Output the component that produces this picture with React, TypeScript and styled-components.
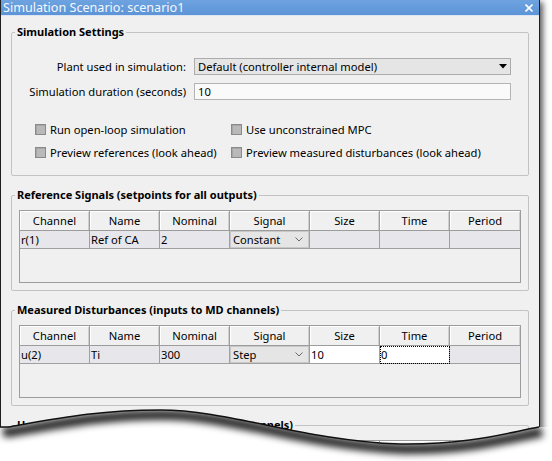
import * as React from "react";
import styled, { createGlobalStyle } from "styled-components";

const GlobalStyle = createGlobalStyle`
  html, body {
    margin: 0;
    padding: 0;
    background: #fff;
  }
  body {
    font-family: "Noto Sans", "Open Sans", "Liberation Sans", sans-serif;
    font-size: 11.2px;
    color: #000;
  }
`;

type CellKind = "plain" | "combo" | "edit" | "focus";
type Cell = { text: string; kind?: CellKind };

const COLUMNS = ["Channel", "Name", "Nominal", "Signal", "Size", "Time", "Period"];

const REF_ROW: Cell[] = [
  { text: "r(1)" },
  { text: "Ref of CA" },
  { text: "2" },
  { text: "Constant", kind: "combo" },
  { text: "" },
  { text: "" },
  { text: "" },
];

const MD_ROW: Cell[] = [
  { text: "u(2)" },
  { text: "Ti" },
  { text: "300" },
  { text: "Step", kind: "combo" },
  { text: "10", kind: "edit" },
  { text: "0", kind: "focus" },
  { text: "" },
];

// the torn-paper cut across the bottom of the screenshot
const TEAR =
  "M0,427 L8,427 C60,418 100,410 160,410 C230,410 300,440 400,444 C470,445 510,432 539,427";
const BELOW_TEAR = TEAR + " L552,427 L552,461 L0,461 Z";

const Chevron = () => (
  <svg width="8" height="5" viewBox="0 0 8 5">
    <polyline points="0.5,0.5 4,4 7.5,0.5" fill="none" stroke="#6a6a6a" strokeWidth="1" />
  </svg>
);

const SignalTable: React.FC<{ row?: Cell[] }> = ({ row }) => (
  <TableFrame>
    <TableRow>
      {COLUMNS.map((c) => (
        <HeaderCell key={c}>{c}</HeaderCell>
      ))}
    </TableRow>
    {row && (
      <TableRow>
        {row.map((cell, i) =>
          cell.kind === "combo" ? (
            <DataCell key={i} $kind="plain">
              <CellCombo>
                <span>{cell.text}</span>
                <Chevron />
              </CellCombo>
            </DataCell>
          ) : (
            <DataCell key={i} $kind={cell.kind || "plain"}>
              {cell.text}
            </DataCell>
          )
        )}
      </TableRow>
    )}
  </TableFrame>
);

export default function App() {
  return (
    <>
      <GlobalStyle />
      <Stage>
        <Window>
          <TitleBar>
            <span>Simulation Scenario: scenario1</span>
            <svg width="8" height="8" viewBox="0 0 8 8">
              <path d="M0.5,0.5 L7.5,7.5 M7.5,0.5 L0.5,7.5" stroke="#fff" strokeWidth="1.6" />
            </svg>
          </TitleBar>
          <Body>
            <Group>
              <Legend>Simulation Settings</Legend>
              <SettingsBody>
                <FormGrid>
                  <FieldLabel>Plant used in simulation:</FieldLabel>
                  <Select>
                    <span>Default (controller internal model)</span>
                    <svg width="8" height="5" viewBox="0 0 8 5">
                      <polygon points="0,0 8,0 4,4.5" fill="#000" />
                    </svg>
                  </Select>
                  <FieldLabel>Simulation duration (seconds)</FieldLabel>
                  <TextField>10</TextField>
                </FormGrid>
                <CheckGrid>
                  <Check>
                    <CheckBox />
                    Run open-loop simulation
                  </Check>
                  <Check>
                    <CheckBox />
                    Use unconstrained MPC
                  </Check>
                  <Check>
                    <CheckBox />
                    Preview references (look ahead)
                  </Check>
                  <Check>
                    <CheckBox />
                    Preview measured disturbances (look ahead)
                  </Check>
                </CheckGrid>
              </SettingsBody>
            </Group>

            <Group>
              <Legend>Reference Signals (setpoints for all outputs)</Legend>
              <TableBody>
                <SignalTable row={REF_ROW} />
              </TableBody>
            </Group>

            <Group>
              <Legend>Measured Disturbances (inputs to MD channels)</Legend>
              <TableBody>
                <SignalTable row={MD_ROW} />
              </TableBody>
            </Group>

            <Group>
              <Legend>Unmeasured Disturbances (inputs to UD channels)</Legend>
              <TableBody>
                <SignalTable />
              </TableBody>
            </Group>
          </Body>
        </Window>

        <Tear viewBox="0 0 552 461">
          <defs>
            <clipPath id="below-tear">
              <path d={BELOW_TEAR} />
            </clipPath>
            <filter id="tear-soft" x="-10%" y="-100%" width="120%" height="300%">
              <feGaussianBlur stdDeviation="3.5" />
            </filter>
          </defs>
          <path d={BELOW_TEAR} fill="#fff" />
          <g clipPath="url(#below-tear)">
            <path
              d={TEAR}
              transform="translate(3 5)"
              fill="none"
              stroke="rgba(0,0,0,0.85)"
              strokeWidth="10"
              filter="url(#tear-soft)"
            />
          </g>
          <path d={TEAR} fill="none" stroke="#111" strokeWidth="1.5" />
        </Tear>
      </Stage>
    </>
  );
}

const Stage = styled.div`
  position: relative;
  width: 552px;
  height: 461px;
  overflow: hidden;
  background: #fff;
`;

const Window = styled.div`
  width: 540px;
  height: 480px;
  box-sizing: border-box;
  border-left: 1px solid #1e1e1e;
  border-right: 1px solid #1e1e1e;
  background: #f0f0f0;
  box-shadow: 3px 2px 6px rgba(0, 0, 0, 0.65);
  display: flex;
  flex-direction: column;
`;

const TitleBar = styled.div`
  height: 16px;
  box-sizing: border-box;
  background: linear-gradient(#6ea3e0, #5b93d6);
  box-shadow: inset 0 -1px 0 #dce6f2;
  color: #f4f8fc;
  font-size: 12.6px;
  line-height: 16px;
  padding: 0 6px 1px 2px;
  display: flex;
  align-items: center;
  justify-content: space-between;
  white-space: nowrap;
`;

const Body = styled.div`
  padding: 9px 10px 0;
  display: flex;
  flex-direction: column;
`;

const Group = styled.fieldset`
  margin: 12px 0 0;
  padding: 0;
  min-inline-size: 0;
  border: 1px solid #c3c3c3;
  border-radius: 2px;

  &:first-child {
    margin-top: 0;
  }
`;

const Legend = styled.legend`
  margin-left: 3px;
  padding: 0 2px;
  font-weight: 700;
  font-size: 11px;
  line-height: 14px;
`;

const SettingsBody = styled.div`
  padding: 19px 0 14px;
`;

const FormGrid = styled.div`
  display: grid;
  grid-template-columns: 174px 317px;
  column-gap: 8px;
  row-gap: 8px;
  align-items: center;
`;

const FieldLabel = styled.div`
  text-align: right;
  white-space: nowrap;
`;

const Select = styled.div`
  height: 17px;
  box-sizing: border-box;
  border: 1px solid #acacac;
  background: #e5e5e5;
  padding: 0 3px;
  display: flex;
  align-items: center;
  justify-content: space-between;
`;

const TextField = styled.div`
  height: 17px;
  box-sizing: border-box;
  border: 1px solid #b4b4b4;
  background: #fafafa;
  padding: 0 3px;
  display: flex;
  align-items: center;
`;

const CheckGrid = styled.div`
  margin-top: 21px;
  padding-left: 23px;
  display: grid;
  grid-template-columns: 196px auto;
  grid-auto-rows: 17px;
  row-gap: 6px;
`;

const Check = styled.label`
  display: flex;
  align-items: center;
  gap: 4px;
  white-space: nowrap;
`;

const CheckBox = styled.span`
  width: 11px;
  height: 11px;
  box-sizing: border-box;
  border: 1px solid #8a8a8a;
  background: #b9b9b9;
  box-shadow: inset 1px 1px 0 #a6a6a6;
`;

const TableBody = styled.div`
  padding: 8px 7px 7px;
`;

const TableFrame = styled.div`
  height: 73px;
  box-sizing: border-box;
  border: 1px solid #9c9c9c;
  background: #f0f0f0;
`;

const TableRow = styled.div`
  display: grid;
  grid-template-columns: 70px 70px 70px 80px 70px 70px 1fr;
`;

const HeaderCell = styled.div`
  height: 20px;
  box-sizing: border-box;
  border-right: 1px solid #9c9c9c;
  border-bottom: 1px solid #9c9c9c;
  box-shadow: inset 1px 1px 0 #fff, inset -1px 0 0 #cfcfcf;
  background: #f0f0f0;
  display: flex;
  align-items: center;
  justify-content: center;

  &:last-child {
    border-right: none;
  }
`;

const DataCell = styled.div<{ $kind: CellKind }>`
  height: 18px;
  box-sizing: border-box;
  border-right: 1px solid #a0a0a0;
  border-bottom: 1px solid #a0a0a0;
  background: ${(p) => (p.$kind === "edit" || p.$kind === "focus" ? "#fff" : "#e6e6eb")};
  outline: ${(p) => (p.$kind === "focus" ? "1px dotted #000" : "none")};
  outline-offset: -1px;
  padding-left: 1px;
  display: flex;
  align-items: center;
  white-space: nowrap;
  overflow: hidden;

  &:last-child {
    border-right: none;
  }
`;

const CellCombo = styled.div`
  flex: 1;
  align-self: stretch;
  margin-left: -1px;
  box-sizing: border-box;
  border: 1px solid #c8c8c8;
  background: #e5e5e5;
  padding: 0 5px 0 2px;
  display: flex;
  align-items: center;
  justify-content: space-between;
`;

const Tear = styled.svg`
  position: absolute;
  left: 0;
  top: 0;
  width: 552px;
  height: 461px;
  pointer-events: none;
`;
